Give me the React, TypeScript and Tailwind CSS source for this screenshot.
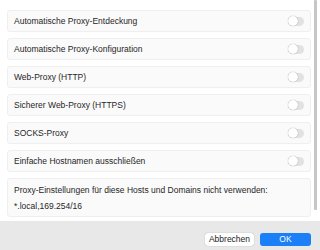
import React from "react";

const rows = [
  "Automatische Proxy-Entdeckung",
  "Automatische Proxy-Konfiguration",
  "Web-Proxy (HTTP)",
  "Sicherer Web-Proxy (HTTPS)",
  "SOCKS-Proxy",
  "Einfache Hostnamen ausschließen",
];

function Toggle() {
  return (
    <div className="relative w-[16px] h-[9px] rounded-full bg-[#e2e2e2]">
      <div className="absolute left-0 top-[-0.5px] w-[10px] h-[10px] rounded-full bg-white shadow-[0_0_1px_rgba(0,0,0,0.45)]" />
    </div>
  );
}

export default function App() {
  return (
    <div
      className="w-[320px] h-[250px] bg-white flex flex-col text-[#262626]"
      style={{ fontFamily: '"Liberation Sans", Arial, sans-serif' }}
    >
      <div className="h-[221px] flex">
        <div className="ml-[7px] w-[304px] pt-[10px] flex flex-col gap-[6px]">
          {rows.map((r) => (
            <div
              key={r}
              className="h-[22px] rounded-[3px] border border-[#efefef] bg-[#fafafa] flex items-center justify-between pl-[6px] pr-[6px]"
            >
              <span className="text-[8.5px] leading-none">{r}</span>
              <Toggle />
            </div>
          ))}
          <div className="h-[39px] rounded-[3px] border border-[#efefef] bg-[#fafafa] flex flex-col pl-[6px] pt-[6px] gap-[6px]">
            <span className="text-[8.5px] leading-[10px]">
              Proxy-Einstellungen für diese Hosts und Domains nicht verwenden:
            </span>
            <span className="text-[8.5px] leading-[10px]">*.local,169.254/16</span>
          </div>
        </div>
        <div className="ml-[3px] w-[3px] h-[210px] bg-[#c6c6c6] rounded-[1px]" />
      </div>
      <div className="h-[29px] bg-[#e8e8e8] flex items-start justify-end pr-[9px] pt-[12px] gap-[6px]">
        <div className="w-[49px] h-[13px] rounded-[3px] bg-white shadow-[0_0_1px_rgba(0,0,0,0.4)] flex items-center justify-center text-[8.5px] text-[#222]">
          Abbrechen
        </div>
        <div className="w-[51px] h-[13px] rounded-[3px] bg-[#1b7ff8] flex items-center justify-center text-[8.5px] text-white font-medium">
          OK
        </div>
      </div>
    </div>
  );
}
